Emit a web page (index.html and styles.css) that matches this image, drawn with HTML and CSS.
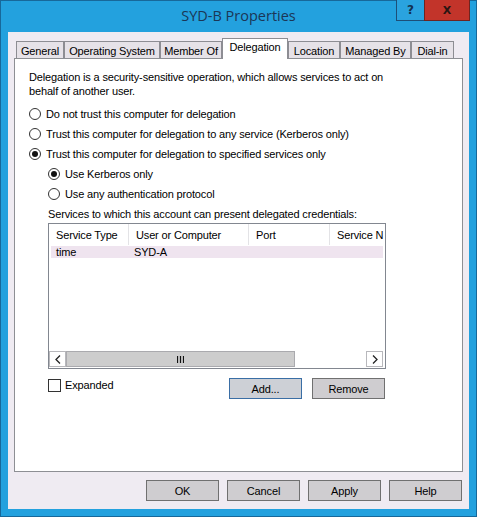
FILE: index.html
```html
<!DOCTYPE html>
<html>
<head>
<meta charset="utf-8">
<title>SYD-B Properties</title>
<link rel="stylesheet" href="styles.css">
</head>
<body>
<div class="window">
  <div class="titlebar">
    <div class="title">SYD-B Properties</div>
    <div class="caption-buttons">
      <div class="cbtn help">?</div>
      <div class="cbtn close">X</div>
    </div>
  </div>
  <div class="client">
    <div class="tabs">
      <div class="tab t-general">General</div>
      <div class="tab t-os">Operating System</div>
      <div class="tab t-member">Member Of</div>
      <div class="tab t-deleg active">Delegation</div>
      <div class="tab t-loc">Location</div>
      <div class="tab t-managed">Managed By</div>
      <div class="tab t-dial">Dial-in</div>
    </div>
    <div class="panel">
      <p class="intro">Delegation is a security-sensitive operation, which allows services to act on<br>behalf of another user.</p>
      <div class="options">
        <div class="opt"><span class="radio"></span>Do not trust this computer for delegation</div>
        <div class="opt"><span class="radio"></span>Trust this computer for delegation to any service (Kerberos only)</div>
        <div class="opt"><span class="radio checked"></span>Trust this computer for delegation to specified services only</div>
        <div class="opt sub"><span class="radio checked"></span>Use Kerberos only</div>
        <div class="opt sub"><span class="radio"></span>Use any authentication protocol</div>
      </div>
      <div class="services">
        <div class="caption">Services to which this account can present delegated credentials:</div>
        <div class="listbox">
          <div class="lv-header">
            <div class="col c1">Service Type</div>
            <div class="col c2">User or Computer</div>
            <div class="col c3">Port</div>
            <div class="col c4">Service N</div>
          </div>
          <div class="lv-body">
            <div class="lv-row selected">
              <div class="cell c1">time</div>
              <div class="cell c2">SYD-A</div>
              <div class="cell c3"></div>
              <div class="cell c4"></div>
            </div>
          </div>
          <div class="hscroll">
            <div class="sb-btn left">
              <svg width="6" height="9" viewBox="0 0 6 9"><path d="M5 0.5 L1 4.5 L5 8.5" fill="none" stroke="#222" stroke-width="1.3"/></svg>
            </div>
            <div class="sb-track">
              <div class="sb-thumb">
                <svg width="7" height="7" viewBox="0 0 7 7"><path d="M0.5 0 V7 M3.5 0 V7 M6.5 0 V7" stroke="#111" stroke-width="1.2"/></svg>
              </div>
            </div>
            <div class="sb-btn right">
              <svg width="6" height="9" viewBox="0 0 6 9"><path d="M1 0.5 L5 4.5 L1 8.5" fill="none" stroke="#222" stroke-width="1.3"/></svg>
            </div>
          </div>
        </div>
        <div class="list-actions">
          <div class="check-row"><span class="checkbox"></span>Expanded</div>
          <div class="action-btns">
            <div class="btn default">Add...</div>
            <div class="btn">Remove</div>
          </div>
        </div>
      </div>
    </div>
    <div class="dialog-buttons">
      <div class="btn">OK</div>
      <div class="btn">Cancel</div>
      <div class="btn">Apply</div>
      <div class="btn">Help</div>
    </div>
  </div>
</div>
</body>
</html>
```

FILE: styles.css
```css
* { box-sizing: border-box; }
html, body { margin: 0; padding: 0; }
body {
  width: 477px;
  height: 517px;
  font-family: "Liberation Sans", Arial, sans-serif;
  font-size: 11px;
  letter-spacing: -0.15px;
  color: #000;
  background: #22a0dd;
}
.window {
  width: 477px;
  height: 517px;
  background: #23a1de;
  border: 1px solid #17689a;
  display: flex;
  flex-direction: column;
}
.titlebar {
  position: relative;
  height: 31px;
  display: flex;
  align-items: center;
  justify-content: center;
}
.title {
  font-family: "Open Sans", "Noto Sans", sans-serif;
  font-size: 14.5px;
  letter-spacing: 0;
  color: #1b3656;
  margin-top: -3px;
}
.caption-buttons {
  position: absolute;
  top: -1px;
  right: 6px;
  display: flex;
}
.cbtn {
  height: 21px;
  display: flex;
  align-items: center;
  justify-content: center;
  border: 1px solid #1d4f78;
  border-top: none;
  font-family: "DejaVu Sans", sans-serif;
  font-weight: bold;
  letter-spacing: 0;
}
.cbtn.help {
  width: 28px;
  background: #2aa3df;
  color: #13304f;
  font-size: 12px;
  border-right: none;
}
.cbtn.close {
  width: 46px;
  background: #c2342a;
  border-color: #6e2420;
  color: #2a1512;
  font-size: 11px;
}
.client {
  flex: 1;
  margin: 0 7px 7px 7px;
  background: #efebf2;
  padding: 6px 6px 7px 6px;
  display: flex;
  flex-direction: column;
}
.tabs {
  height: 20px;
  display: flex;
  align-items: flex-end;
  padding-left: 2px;
  position: relative;
  z-index: 2;
}
.tab {
  height: 17px;
  border: 1px solid #8d8d93;
  border-bottom: none;
  background: #e6e2e8;
  display: flex;
  align-items: center;
  justify-content: center;
  white-space: nowrap;
  padding-top: 1px;
}
.tab.active {
  height: 21px;
  margin-bottom: -1px;
  background: #fff;
  padding-top: 0;
  padding-bottom: 4px;
}
.t-general { width: 48px; }
.t-os { width: 96px; }
.t-member { width: 62px; }
.t-deleg { width: 66px; }
.t-loc { width: 52px; }
.t-managed { width: 71px; }
.t-dial { width: 43px; }
.panel {
  height: 414px;
  background: #fff;
  border: 1px solid #8d8f94;
  padding: 11px 14px 0 14px;
  position: relative;
  z-index: 1;
}
.intro {
  margin: 0;
  line-height: 14px;
}
.options {
  margin-top: 6px;
}
.opt {
  height: 20px;
  display: flex;
  align-items: center;
  white-space: nowrap;
}
.opt.sub { padding-left: 19px; }
.radio {
  width: 12px;
  height: 12px;
  border-radius: 50%;
  border: 1px solid #333;
  background: #fff;
  margin-right: 5px;
  flex: none;
  display: flex;
  align-items: center;
  justify-content: center;
}
.radio.checked::after {
  content: "";
  width: 6px;
  height: 6px;
  border-radius: 50%;
  background: #111;
}
.services {
  margin-left: 19px;
  width: 338px;
}
.caption {
  margin-top: 3px;
  line-height: 14px;
  white-space: nowrap;
}
.listbox {
  margin-top: 2px;
  height: 146px;
  border: 1px solid #828790;
  background: #fff;
  display: flex;
  flex-direction: column;
  overflow: hidden;
}
.lv-header {
  height: 21px;
  display: flex;
  flex: none;
}
.col, .cell {
  flex: none;
  white-space: nowrap;
  overflow: hidden;
  padding-left: 7px;
  display: flex;
  align-items: center;
}
.col { border-right: 1px solid #e3e3e6; }
.c1 { width: 80px; }
.c2 { width: 120px; }
.c3 { width: 81px; }
.c4 { width: 55px; border-right: none; }
.lv-body {
  flex: 1;
  padding: 1px 2px 0 2px;
}
.lv-row {
  height: 12px;
  display: flex;
}
.lv-row .cell { padding-left: 5px; }
.lv-row .c1 { width: 78px; }
.lv-row.selected { background: #efe4ef; }
.hscroll {
  height: 17px;
  flex: none;
  display: flex;
  background: #fff;
  padding: 0 2px 1px 0;
}
.sb-btn {
  width: 17px;
  height: 16px;
  border: 1px solid #b8b8bc;
  display: flex;
  align-items: center;
  justify-content: center;
  background: #fff;
}
.sb-track {
  flex: 1;
  display: flex;
}
.sb-thumb {
  width: 229px;
  height: 16px;
  background: #cdcdcd;
  border: 1px solid #aaaaae;
  display: flex;
  align-items: center;
  justify-content: center;
}
.list-actions {
  margin-top: 9px;
  display: flex;
  justify-content: space-between;
  align-items: flex-start;
}
.check-row {
  display: flex;
  align-items: center;
  height: 14px;
}
.checkbox {
  width: 13px;
  height: 13px;
  border: 1px solid #333;
  background: #fff;
  margin-right: 4px;
}
.action-btns {
  display: flex;
  gap: 10px;
  margin-right: 1px;
}
.btn {
  width: 73px;
  height: 21px;
  border: 1px solid #707070;
  background: #cfcdd0;
  display: flex;
  align-items: center;
  justify-content: center;
}
.btn.default {
  border-color: #3a6ea5;
  background: #cdd0d6;
}
.dialog-buttons {
  margin-top: 8px;
  display: flex;
  justify-content: flex-end;
  gap: 8px;
  padding-right: 1px;
}
```
